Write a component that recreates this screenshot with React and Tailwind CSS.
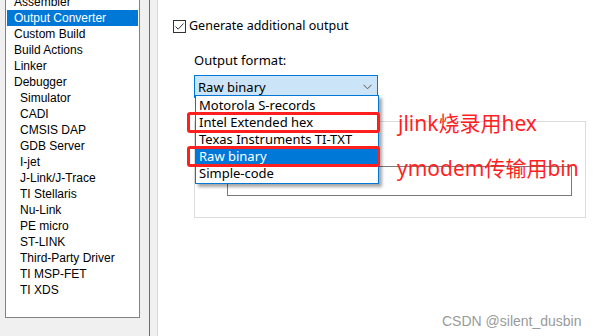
import { Fragment } from "react";

const treeItems = [
  { label: "Assembler", sub: false },
  { label: "Output Converter", sub: false, active: true },
  { label: "Custom Build", sub: false },
  { label: "Build Actions", sub: false },
  { label: "Linker", sub: false },
  { label: "Debugger", sub: false },
  { label: "Simulator", sub: true },
  { label: "CADI", sub: true },
  { label: "CMSIS DAP", sub: true },
  { label: "GDB Server", sub: true },
  { label: "I-jet", sub: true },
  { label: "J-Link/J-Trace", sub: true },
  { label: "TI Stellaris", sub: true },
  { label: "Nu-Link", sub: true },
  { label: "PE micro", sub: true },
  { label: "ST-LINK", sub: true },
  { label: "Third-Party Driver", sub: true },
  { label: "TI MSP-FET", sub: true },
  { label: "TI XDS", sub: true },
];

const formats = [
  "Motorola S-records",
  "Intel Extended hex",
  "Texas Instruments TI-TXT",
  "Raw binary",
  "Simple-code",
];

function Sidebar() {
  return (
    <div className="w-[150px] h-full bg-[#f0f0f0] shrink-0 border-r border-[#6d6d6d]">
      <div className="ml-[5px] w-[135px] h-[318px] bg-white border-x border-b border-[#828282] overflow-hidden">
        <div className="-mt-[6px] flex flex-col font-['Liberation_Sans',sans-serif] text-[12px] text-black">
          {treeItems.map((it) => (
            <div
              key={it.label}
              className={
                "h-[16px] leading-[16px] mx-[1px] " +
                (it.sub ? "pl-[13px] " : "pl-[7px] ") +
                (it.active ? "bg-[#0078d7] text-white" : "")
              }
            >
              {it.label}
            </div>
          ))}
        </div>
      </div>
    </div>
  );
}

function Checkbox() {
  return (
    <div className="w-[13px] h-[13px] border border-[#333333] bg-white flex items-center justify-center">
      <svg width="11" height="11" viewBox="0 0 11 11">
        <path d="M1.5 5.5 L4.2 8.2 L9.5 2.5" fill="none" stroke="#333" strokeWidth="1" />
      </svg>
    </div>
  );
}

export default function App() {
  return (
    <div className="w-[601px] h-[336px] flex bg-white overflow-hidden">
      <Sidebar />
      <div className="w-[8px] h-full bg-[#f0f0f0] border-r border-[#dadada] shrink-0"></div>

      <div className="relative flex-1 h-full font-['Noto_Sans','Noto_Sans_CJK_SC',sans-serif] text-[13px] text-black">
        <div className="pt-[18px] pl-[15px] flex items-center gap-[3px]">
          <Checkbox />
          <span className="leading-[16px] text-[12.5px]">Generate additional output</span>
        </div>

        <div className="pl-[36px] pt-[18px]">
          <div className="leading-[16px]">Output format:</div>
          <div className="mt-[7px] w-[184px] h-[23px] bg-[#cce4f7] border border-[#0078d7] flex items-center justify-between pl-[3px] pr-[5px]">
            <span className="leading-[16px]">Raw binary</span>
            <svg width="9" height="6" viewBox="0 0 9 6">
              <path d="M0.5 0.8 L4.5 4.8 L8.5 0.8" fill="none" stroke="#555" strokeWidth="1" />
            </svg>
          </div>

          <div className="mt-[23px] w-[392px] h-[97px] border border-[#dcdcdc] pt-[44px] pl-[32px]">
            <div className="w-[345px] h-[30px] border border-[#7a7a7a]"></div>
          </div>
        </div>

        {/* dropdown list */}
        <div className="absolute left-[37px] top-[95px] w-[184px] border border-[#0078d7] bg-white shadow-[3px_3px_3px_rgba(0,0,0,0.35)] py-[1px]">
          {formats.map((f) => (
            <div
              key={f}
              className={
                "h-[17px] leading-[17px] pl-[3px] " +
                (f === "Raw binary" ? "bg-[#0078d7] text-white" : "")
              }
            >
              {f}
            </div>
          ))}
        </div>

        {/* red annotation frames */}
        <div className="absolute left-[29px] top-[112px] w-[193px] h-[21px] border-[3px] border-[#ff1f1f] rounded-[3px]"></div>
        <div className="absolute left-[29px] top-[146px] w-[193px] h-[21px] border-[3px] border-[#ff1f1f] rounded-[3px]"></div>

        <div className="absolute left-[240px] top-[110px] text-[21px] leading-[27px] text-[#ff1f1f]">
          jlink烧录用hex
        </div>
        <div className="absolute left-[239px] top-[155px] text-[21px] leading-[27px] text-[#ff1f1f]">
          ymodem传输用bin
        </div>

        <div className="absolute left-[284px] top-[311px] font-['Liberation_Sans',sans-serif] text-[14px] text-[#9a9a9a]">
          CSDN @silent_dusbin
        </div>
      </div>
    </div>
  );
}
